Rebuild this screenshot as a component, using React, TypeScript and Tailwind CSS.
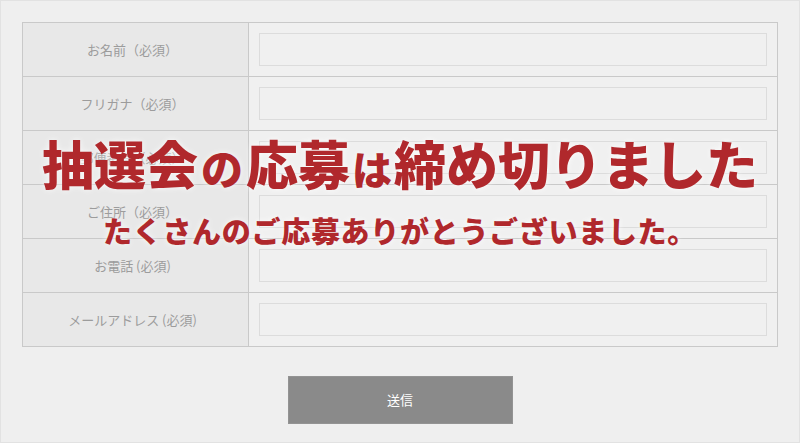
import React from "react";

const rows: { label: string }[] = [
  { label: "お名前（必須）" },
  { label: "フリガナ（必須）" },
  { label: "郵便番号（必須）" },
  { label: "ご住所（必須）" },
  { label: "お電話 (必須)" },
  { label: "メールアドレス (必須)" },
];

export default function App() {
  return (
    <div
      className="relative w-[800px] h-[443px] overflow-hidden border border-[#e2e2e2] bg-[#efefef] pt-[21px] px-[21px]"
      style={{ fontFamily: '"Noto Sans CJK JP", "Noto Sans", sans-serif' }}
    >
      <div className="border border-[#c9c9c9] bg-[#f0f0f0]">
        {rows.map((r, i) => (
          <div
            key={i}
            className={`flex ${i > 0 ? "h-[54px] border-t border-[#c9c9c9]" : "h-[53px]"}`}
          >
            <div className="w-[226px] shrink-0 border-r border-[#c9c9c9] bg-[#e8e8e8] flex items-center justify-center pr-[6px] text-[13px] text-[#9c9c9c]">
              {r.label}
            </div>
            <div className="flex-1 flex items-center px-[10px]">
              <div className="w-full h-[33px] border border-[#dcdcdc] bg-[#f0f0f0]" />
            </div>
          </div>
        ))}
      </div>
      <div className="flex justify-center mt-[29px]">
        <div className="w-[225px] h-[48px] bg-[#8a8a8a] border border-[#939393] flex items-center justify-center text-[13px] text-white">
          送信
        </div>
      </div>

      <div className="absolute inset-0 flex flex-col items-center pointer-events-none">
        <div className="mt-[136px] flex items-baseline text-[#b0282c] font-black leading-none whitespace-nowrap [text-shadow:0_0_6px_rgba(255,255,255,0.8)]">
          <span className="text-[52px]">抽選会</span>
          <span className="text-[42px] mx-[3px]">の</span>
          <span className="text-[52px]">応募</span>
          <span className="text-[40px] mx-[2px]">は</span>
          <span className="text-[52px]">締め切りました</span>
        </div>
        <div className="mt-[27px] text-[29px] tracking-[0.7px] font-black leading-none text-[#b0282c] whitespace-nowrap [text-shadow:0_0_6px_rgba(255,255,255,0.8)]">
          たくさんのご応募ありがとうございました。
        </div>
      </div>
    </div>
  );
}
